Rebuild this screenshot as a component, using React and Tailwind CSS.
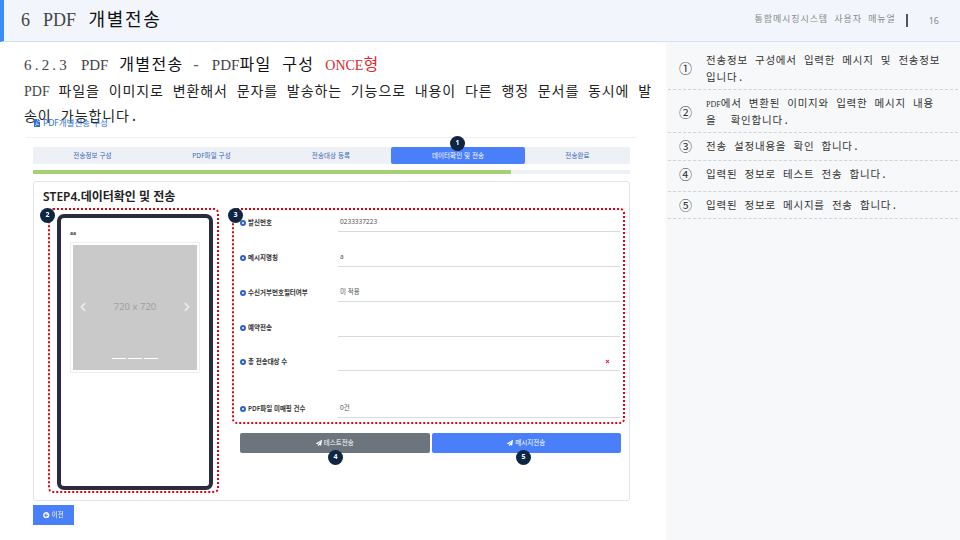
import { FaPaperPlane, FaArrowCircleLeft, FaChevronLeft, FaChevronRight, FaFilePdf, FaTimes } from 'react-icons/fa'

const MONO = 'font-["Liberation_Mono","Noto_Sans_CJK_KR",monospace]'
const SERIF = 'font-["Liberation_Serif",serif] tracking-normal'
const SANS = 'font-["Noto_Sans","Noto_Sans_CJK_KR",sans-serif]'

const tabs = ['전송정보 구성', 'PDF파일 구성', '전송대상 등록', '데이터확인 및 전송', '전송완료']

const fields = [
  { label: '발신번호', value: '0233337223', h: 'h-[22px]' },
  { label: '메시지명칭', value: 'a', h: 'h-[35px]' },
  { label: '수신거부번호필터여부', value: '미 적용', h: 'h-[35px]' },
  { label: '예약전송', value: '', h: 'h-[35px]' },
  { label: '총 전송대상 수', value: '', h: 'h-[34px]', mark: true },
  { label: 'PDF파일 미매핑 건수', value: '0건', h: 'h-[47px]' },
]

const notes = [
  { n: '①', h: 'h-[48px] pt-[8px]', lines: ['전송정보 구성에서 입력한 메시지 및 전송정보', '입니다.'] },
  { n: '②', h: 'h-[43px] pt-[4px]', lines: [<><span className={`text-[8px] ${SERIF}`}>PDF</span>에서 변환된 이미지와 입력한 메시지 내용</>, '을  확인합니다.'] },
  { n: '③', h: 'h-[28px] pt-[2px]', lines: ['전송 설정내용을 확인 합니다.'] },
  { n: '④', h: 'h-[31px] pb-[1px]', lines: ['입력된 정보로 테스트 전송 합니다.'] },
  { n: '⑤', h: 'h-[27px] pt-[2px]', lines: ['입력된 정보로 메시지를 전송 합니다.'] },
]

function Badge({ n, className }) {
  return (
    <span className={`absolute z-10 flex h-[15px] w-[15px] items-center justify-center rounded-full bg-[#0f2544] text-[7px] font-bold text-white ${className}`}>
      {n}
    </span>
  )
}

function Field({ label, value, h, mark }) {
  return (
    <div className={`flex ${h} items-end`}>
      <div className="flex w-[104px] items-center gap-[2px] pb-[6px] pl-[6px] text-[6.5px] font-semibold leading-[7px] text-[#333]">
        <span className="h-[6px] w-[6px] shrink-0 rounded-full border-[2px] border-[#2f62c9] bg-white"></span>
        {label}
      </div>
      <div className="flex h-full flex-1 items-end border-b border-[#d8dade] pb-[5px] pl-[2px] pr-[10px] text-[6.5px] leading-[8px] text-[#555]">
        {value}
        {mark && <FaTimes className="mb-[1px] ml-auto text-[5px] text-[#d0304a]" />}
      </div>
    </div>
  )
}

export default function App() {
  return (
    <div className={`flex h-[540px] w-[960px] flex-col overflow-hidden bg-white ${SANS}`}>
      {/* 상단 제목 */}
      <header className="flex h-[42px] shrink-0 items-center justify-between border-b border-[#d5e2f2] border-l-[4px] border-l-[#3b8bfa] bg-[#f2f6fc] pl-[17px] pr-[21px]">
        <h1 className={`text-[18px] tracking-[1.7px] text-[#111] ${MONO}`}>
          <span className={`mr-[13px] text-[#444] ${SERIF}`}>6</span>
          <span className={`text-[#444] ${SERIF}`}>PDF</span> 개별전송
        </h1>
        <div className="flex items-center text-[9px] text-[#888]">
          <span className={`tracking-[0.9px] ${MONO}`}>통합메시징시스템 사용자 매뉴얼</span>
          <span className="ml-[10px] h-[13px] w-[2px] bg-[#555]"></span>
          <span className="ml-[21px]">16</span>
        </div>
      </header>

      <div className="flex flex-1">
        {/* 왼쪽 본문 */}
        <main className="w-[666px] shrink-0">
          <div className={`px-[24px] pt-[11px] ${MONO}`}>
            <h2 className="h-[26px] text-[16px] leading-[25px] tracking-[1.3px] text-[#111]">
              <span className={`!tracking-[3.2px] text-[15px] text-[#444] ${SERIF}`}>6.2.3</span> <span className={`text-[15px] text-[#444] ${SERIF}`}>PDF</span> 개별전송 <span className="-ml-[3px] tracking-[0px] text-[#666]">-</span> <span className={`text-[15px] text-[#444] ${SERIF}`}>PDF</span>파일 구성 <span className="text-[#e0262c]"><span className={`text-[14px] ${SERIF}`}>ONCE</span>형</span>
            </h2>
            <p className="w-[628px] text-[14px] leading-[25px] tracking-[0.9px] text-[#222]">
              <span className="block text-justify [text-align-last:justify] [word-spacing:-3px]"><span className={`text-[#444] ${SERIF}`}>PDF</span> 파일을 이미지로 변환해서 문자를 발송하는 기능으로 내용이 다른 행정 문서를 동시에 발</span>
              <span className="block">송이 가능합니다.</span>
            </p>
          </div>

          <div className="-mt-[13px] ml-[33px] flex h-[12px] items-center gap-[2px] text-[8.5px] text-[#2f6fd6]">
            <FaFilePdf className="text-[8px]" />
            PDF개별전송 구성
          </div>

          <div className="relative ml-[26px] mt-[8px] w-[610px] border-t border-[#eef0f2] pl-[7px] pr-[6px] pt-[9px] blur-[0.3px]">
            <Badge n="1" className="left-[424px] -top-[2px]" />
            <div className="grid h-[17px] grid-cols-[119px_119px_120px_134px_1fr] bg-[#edf0f5] text-[6.5px] tracking-[0.1px] text-[#3a64b8]">
              {tabs.map((t, i) => (
                <div key={t} className={`flex items-center justify-center ${i === 3 ? 'rounded-[2px] bg-[#4a7ffa] text-white' : ''}`}>{t}</div>
              ))}
            </div>
            <div className="mt-[6px] h-[4px] bg-[#eef0f3]">
              <div className="h-full w-[478px] bg-[#a6cf75]"></div>
            </div>

            <section className="relative mt-[7px] h-[320px] rounded-[3px] border border-[#e1e4e8] bg-white">
              <div className="pl-[9px] pt-[7px] text-[12px] font-semibold leading-[16px] text-[#222]">STEP4.데이터확인 및 전송</div>

              <div className="flex pl-[14px] pt-[3px]">
                {/* 미리보기 */}
                <div className="relative h-[285px] w-[171px] shrink-0 rounded-[5px] border-2 border-dotted border-[#e00010] pl-[7px] pt-[4px]">
                  <Badge n="2" className="-left-[10px] -top-[2px]" />
                  <div className="h-[276px] w-[156px] rounded-[7px] border-[4px] border-[#2b2b40] bg-white px-[9px]">
                    <div className="h-[24px] pt-[12px] text-[5px] font-bold leading-[6px] text-[#333]">aa</div>
                    <div className="border border-[#eeeeee] p-[2px]">
                      <div className="relative flex h-[125px] items-center justify-center bg-[#c9c9c9] text-[9.5px] text-[#9f9f9f]">
                        720 x 720
                        <FaChevronLeft className="absolute left-[5px] top-[57px] text-[10px] text-[#ececec]" />
                        <FaChevronRight className="absolute right-[5px] top-[57px] text-[10px] text-[#ececec]" />
                        <div className="absolute bottom-[11px] left-[39px] flex gap-[2px]">
                          <span className="h-[1px] w-[14px] bg-white"></span>
                          <span className="h-[1px] w-[14px] bg-white"></span>
                          <span className="h-[1px] w-[14px] bg-white"></span>
                        </div>
                      </div>
                    </div>
                  </div>
                </div>

                {/* 전송 정보 */}
                <div className="ml-[13px] w-[393px]">
                  <div className="relative h-[216px] rounded-[5px] border-2 border-dotted border-[#e00010] pr-[3px]">
                    <Badge n="3" className="-left-[6px] -top-[2px]" />
                    {fields.map((f) => <Field key={f.label} {...f} />)}
                  </div>
                  <div className="relative ml-[8px] mt-[9px] flex h-[20px] w-[381px] gap-[2px] text-[6.5px] text-white">
                    <div className="flex flex-1 items-center justify-center gap-[2px] rounded-[2px] bg-[#6c757d]"><FaPaperPlane className="text-[6px]" />테스트전송</div>
                    <div className="flex flex-1 items-center justify-center gap-[2px] rounded-[2px] bg-[#4a7ffa]"><FaPaperPlane className="text-[6px]" />메시지전송</div>
                    <Badge n="4" className="left-[88px] top-[17px]" />
                    <Badge n="5" className="left-[276px] top-[17px]" />
                  </div>
                </div>
              </div>
            </section>

            <div className="mt-[4px] flex h-[20px] w-[41px] items-center justify-center gap-[2px] bg-[#4a7ffa] text-[6.5px] text-white">
              <FaArrowCircleLeft className="text-[6.5px]" />이전
            </div>
          </div>
        </main>

        {/* 오른쪽 설명 */}
        <aside className={`flex-1 bg-[#f7f8fa] px-[2px] ${MONO}`}>
          {notes.map((note) => (
            <div key={note.n} className={`flex ${note.h} items-center border-b border-dashed border-[#cfd2d6] pl-[11px] pr-[14px] text-[10.5px] leading-[17px] tracking-[0.8px] text-[#333]`}>
              <span className="w-[27px] shrink-0 text-[13px] tracking-normal">{note.n}</span>
              <div className="flex-1">
                {note.lines.map((line, i) => <div key={i} className="whitespace-pre">{line}</div>)}
              </div>
            </div>
          ))}
        </aside>
      </div>
    </div>
  )
}
